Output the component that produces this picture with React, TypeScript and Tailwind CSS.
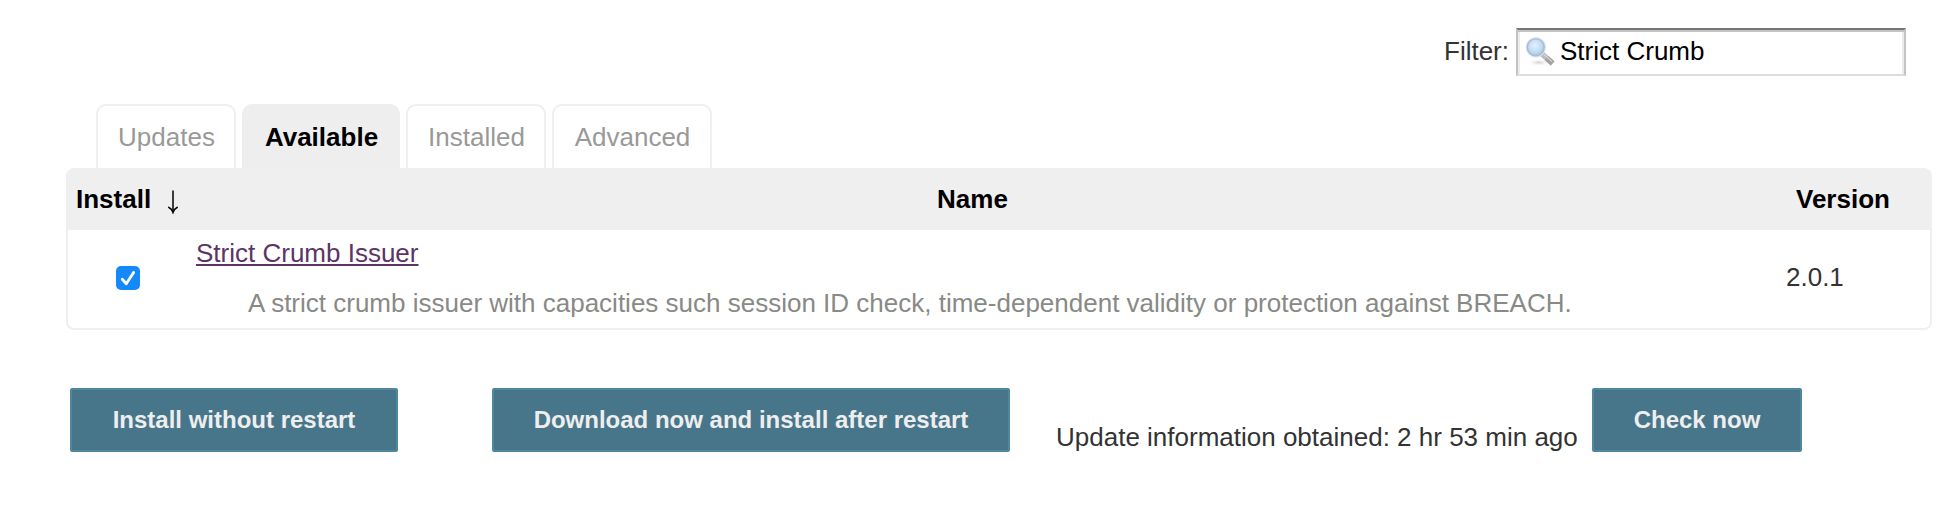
import { useState } from "react";

const tabs = ["Updates", "Available", "Installed", "Advanced"];

function SearchIcon() {
  return (
    <svg className="pointer-events-none absolute top-[8px] left-[8px] h-8 w-8" viewBox="0 0 32 32">
      <defs>
        <radialGradient id="lens" cx="0.45" cy="0.4" r="0.65">
          <stop offset="0" stopColor="#e2effa" />
          <stop offset="0.6" stopColor="#c2dcf3" />
          <stop offset="1" stopColor="#9cc2e6" />
        </radialGradient>
        <radialGradient id="shade">
          <stop offset="0" stopColor="#cfcfcf" />
          <stop offset="1" stopColor="#ffffff" stopOpacity="0" />
        </radialGradient>
      </defs>
      <ellipse cx="15" cy="26.5" rx="13" ry="3.8" fill="url(#shade)" />
      <path d="M18 18 L28.6 27.4" stroke="#bcbcbc" strokeWidth="5.6" />
      <path d="M22.5 22 L28.6 27.4" stroke="#a3a3a3" strokeWidth="5.6" />
      <path d="M20 18.5 L28 25.6" stroke="#d6d6d6" strokeWidth="1.2" />
      <circle cx="11.8" cy="11.3" r="10.2" fill="#e2e2e2" />
      <circle cx="11.8" cy="11.3" r="8.4" fill="url(#lens)" stroke="#9fbfe0" strokeWidth="1.4" />
    </svg>
  );
}

function ActionButton({ label, className }: { label: string; className: string }) {
  return (
    <button
      className={`h-16 shrink-0 rounded-[2px] border-2 border-[#4e889e] bg-[#47768a] text-2xl font-bold whitespace-nowrap text-[#eeeeee] ${className}`}
    >
      {label}
    </button>
  );
}

export default function App() {
  const [filter, setFilter] = useState("Strict Crumb");
  const [checked, setChecked] = useState(true);

  return (
    <div className="h-[532px] w-[1950px] overflow-hidden bg-white font-['Liberation_Sans',Arial,sans-serif] text-[26px] leading-[30px] text-[#333333]">
      <div className="flex h-[104px] items-start justify-end pt-7 pr-11">
        <label htmlFor="filter" className="mr-[7px] pt-2">
          Filter:
        </label>
        <div className="relative h-12 w-[390px]">
          <input
            id="filter"
            value={filter}
            onChange={(e) => setFilter(e.target.value)}
            className="h-12 w-full border-2 border-t-[#767676] border-r-[#c3c3c3] border-b-[#dddddd] border-l-[#c3c3c3] bg-white pt-0 pb-[2px] pl-[42px] text-black shadow-[inset_0_2px_0_#c3c3c3,inset_2px_0_0_#ececec,inset_-2px_0_0_#ececec] outline-none"
          />
          <SearchIcon />
        </div>
      </div>

      <div className="flex h-16 gap-[6px] pl-24">
        {tabs.map((tab) => (
          <div
            key={tab}
            className={
              tab === "Available"
                ? "h-16 w-[158px] rounded-t-[10px] bg-[#eeeeee] pt-[18px] pl-px text-center font-bold text-black"
                : `h-16 rounded-t-[10px] border-2 border-b-0 border-[#efefef] pt-4 pl-px text-center text-[#999999] ${
                    tab === "Advanced" ? "w-[160px]" : "w-[140px]"
                  }`
            }
          >
            {tab}
          </div>
        ))}
      </div>

      <div className="ml-[66px] h-[162px] w-[1866px] overflow-hidden rounded-lg border-2 border-t-0 border-[#efefef]">
        <div className="flex h-[62px] items-center bg-[#efefef] font-bold text-black">
          <div className="flex w-[126px] items-center pl-[8px]">
            Install
            <svg className="mt-[6px] ml-[16px] h-6 w-3" viewBox="0 0 12 24" fill="none" stroke="#000000">
              <path d="M6 0.5 V21.5" strokeWidth="1.5" />
              <path d="M1.3 17 Q4.6 18.6 6 22.6 Q7.4 18.6 10.7 17" strokeWidth="1.5" />
            </svg>
          </div>
          <div className="w-[1554px] pl-[3px] text-center">Name</div>
          <div className="w-[182px] pl-[48px]">Version</div>
        </div>
        <div className="flex h-[98px] items-start">
          <div className="w-32 pt-9 pl-12">
            <button
              role="checkbox"
              aria-checked={checked}
              aria-label="Install Strict Crumb Issuer"
              onClick={() => setChecked(!checked)}
              className="block h-6 w-6 rounded-[5px] bg-[#1588fb]"
            >
              {checked && (
                <svg viewBox="0 0 24 24" className="h-6 w-6" fill="none" stroke="#ffffff" strokeWidth="2.8" strokeLinecap="round" strokeLinejoin="round">
                  <path d="M6.3 13.2 L10.3 17.7 L17.6 6.4" />
                </svg>
              )}
            </button>
          </div>
          <div className="w-[1590px] pt-2">
            <a href="#issuer" className="text-[#5c3566] underline decoration-2 underline-offset-2">
              Strict Crumb Issuer
            </a>
            <p className="mt-5 pl-[52px] whitespace-nowrap text-[#888a85]">
              A strict crumb issuer with capacities such session ID check, time-dependent validity or protection against BREACH.
            </p>
          </div>
          <div className="pt-8">2.0.1</div>
        </div>
      </div>

      <div className="flex items-start pt-[58px] pl-[70px]">
        <ActionButton label="Install without restart" className="w-[328px]" />
        <ActionButton label="Download now and install after restart" className="ml-[94px] w-[518px]" />
        <span className="ml-[46px] w-[536px] pt-[34px] whitespace-nowrap">Update information obtained: 2 hr 53 min ago</span>
        <ActionButton label="Check now" className="w-[210px]" />
      </div>
    </div>
  );
}
